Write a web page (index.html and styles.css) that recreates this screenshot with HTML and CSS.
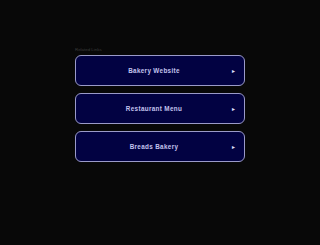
FILE: index.html
```html
<!DOCTYPE html>
<html lang="en">
    <head>
        <meta charset="UTF-8">
        <meta name="viewport" content="width=device-width, initial-scale=1.0">
        <title>Related Links</title>
        <link rel="stylesheet" href="styles.css">
    </head>
    <body>
        <div class="links">
            <p class="links-title">Related Links</p>

            <a class="link-button" href="#">
                <span class="link-text">Bakery Website</span>
                <span class="link-arrow">&#9658;</span>
            </a>

            <a class="link-button" href="#">
                <span class="link-text">Restaurant Menu</span>
                <span class="link-arrow">&#9658;</span>
            </a>

            <a class="link-button" href="#">
                <span class="link-text">Breads Bakery</span>
                <span class="link-arrow">&#9658;</span>
            </a>
        </div>
    </body>
</html>
```

FILE: styles.css
```css
body
{
    margin: 0;
    background-color: #080808;
    font-family: "Liberation Sans", Arial, sans-serif;
}

.links
{
    width: 170px;
    margin-left: 75px;
    padding-top: 47px;
    display: flex;
    flex-direction: column;
    gap: 7px;
}

.links-title
{
    margin: 0 0 -4px 0;
    font-size: 4.4px;
    line-height: 5px;
    color: #3c3c3c;
}

.link-button
{
    position: relative;
    display: flex;
    align-items: center;
    justify-content: center;
    height: 29px;
    padding-right: 12px;
    background-color: #020242;
    border: 1px solid #9a9ac8;
    border-radius: 6px;
    text-decoration: none;
}

.link-text
{
    color: #c4c4ee;
    font-size: 6.3px;
    font-weight: bold;
    letter-spacing: 0.35px;
}

.link-arrow
{
    position: absolute;
    right: 8px;
    color: #e0e0ff;
    font-size: 5px;
}
```
